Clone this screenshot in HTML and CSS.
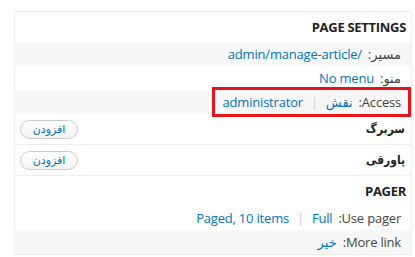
FILE: index.html
```html
<!DOCTYPE html>
<html lang="fa" dir="rtl">
<head>
  <meta charset="UTF-8">
  <meta name="viewport" content="width=device-width, initial-scale=1.0">
  <title>Views settings</title>
  <link rel="stylesheet" href="styles.css">
</head>
<body>
  <div class="panel">
    <h3 class="section-title">PAGE SETTINGS</h3>
    <div class="row odd">
      <span class="label">مسیر:</span>
      <span class="value"><a href="#">/admin/manage-article</a></span>
    </div>
    <div class="row">
      <span class="label">منو:</span>
      <span class="value"><a href="#">No menu</a></span>
    </div>
    <div class="row odd">
      <div class="highlight">
        <span class="label">Access:</span>
        <span class="value"><a href="#">نقش</a><span class="sep">|</span><a href="#">administrator</a></span>
      </div>
    </div>
    <div class="area">
      <span class="area-title">سربرگ</span>
      <button class="add-btn">افزودن</button>
    </div>
    <div class="area">
      <span class="area-title">پاورقی</span>
      <button class="add-btn">افزودن</button>
    </div>
    <h3 class="section-title">PAGER</h3>
    <div class="row">
      <span class="label">Use pager:</span>
      <span class="value"><a href="#">Full</a><span class="sep">|</span><a href="#">Paged, 10 items</a></span>
    </div>
    <div class="row odd">
      <span class="label">More link:</span>
      <span class="value"><a href="#">خیر</a></span>
    </div>
  </div>
</body>
</html>
```

FILE: styles.css
```css
* {
  margin: 0;
  padding: 0;
  box-sizing: border-box;
}
body {
  background: #fff;
  padding: 11px 3px 0 15px;
  font-family: "Open Sans", "DejaVu Sans", sans-serif;
  font-size: 13px;
  letter-spacing: -0.2px;
  color: #333;
}
a {
  color: #0074bd;
  text-decoration: none;
}
.panel {
  border: 1px solid #eeeeee;
  width: 398px;
}
.section-title {
  height: 30px;
  line-height: 30px;
  padding-right: 5px;
  font-size: 13px;
  font-weight: bold;
  color: #222;
  letter-spacing: -0.3px;
}
.row {
  display: flex;
  align-items: center;
  height: 24px;
  padding-right: 10px;
}
.row.odd {
  background: #f7f7f7;
}
.label {
  margin-left: 6px;
  color: #444;
}
.value {
  display: flex;
  align-items: center;
}
.sep {
  color: #c8c8c8;
  margin: 0 8px;
}
.highlight {
  display: flex;
  align-items: center;
  height: 24px;
  margin-right: -7px;
  padding: 0 7px 0 8px;
  outline: 3px solid #e8141c;
}
.area {
  display: flex;
  align-items: center;
  justify-content: space-between;
  height: 31px;
  padding: 0 6px 0 5px;
  border-bottom: 1px solid #eeeeee;
}
.area-title {
  font-family: "DejaVu Sans Condensed", "DejaVu Sans", sans-serif;
  font-size: 12px;
  font-weight: bold;
  color: #222;
}
.add-btn {
  width: 58px;
  height: 19px;
  border: 1px solid #cccccc;
  border-radius: 10px;
  background: linear-gradient(#ffffff, #f3f3f3);
  color: #0074bd;
  font-family: "DejaVu Sans", sans-serif;
  font-size: 11px;
  cursor: pointer;
}
```
